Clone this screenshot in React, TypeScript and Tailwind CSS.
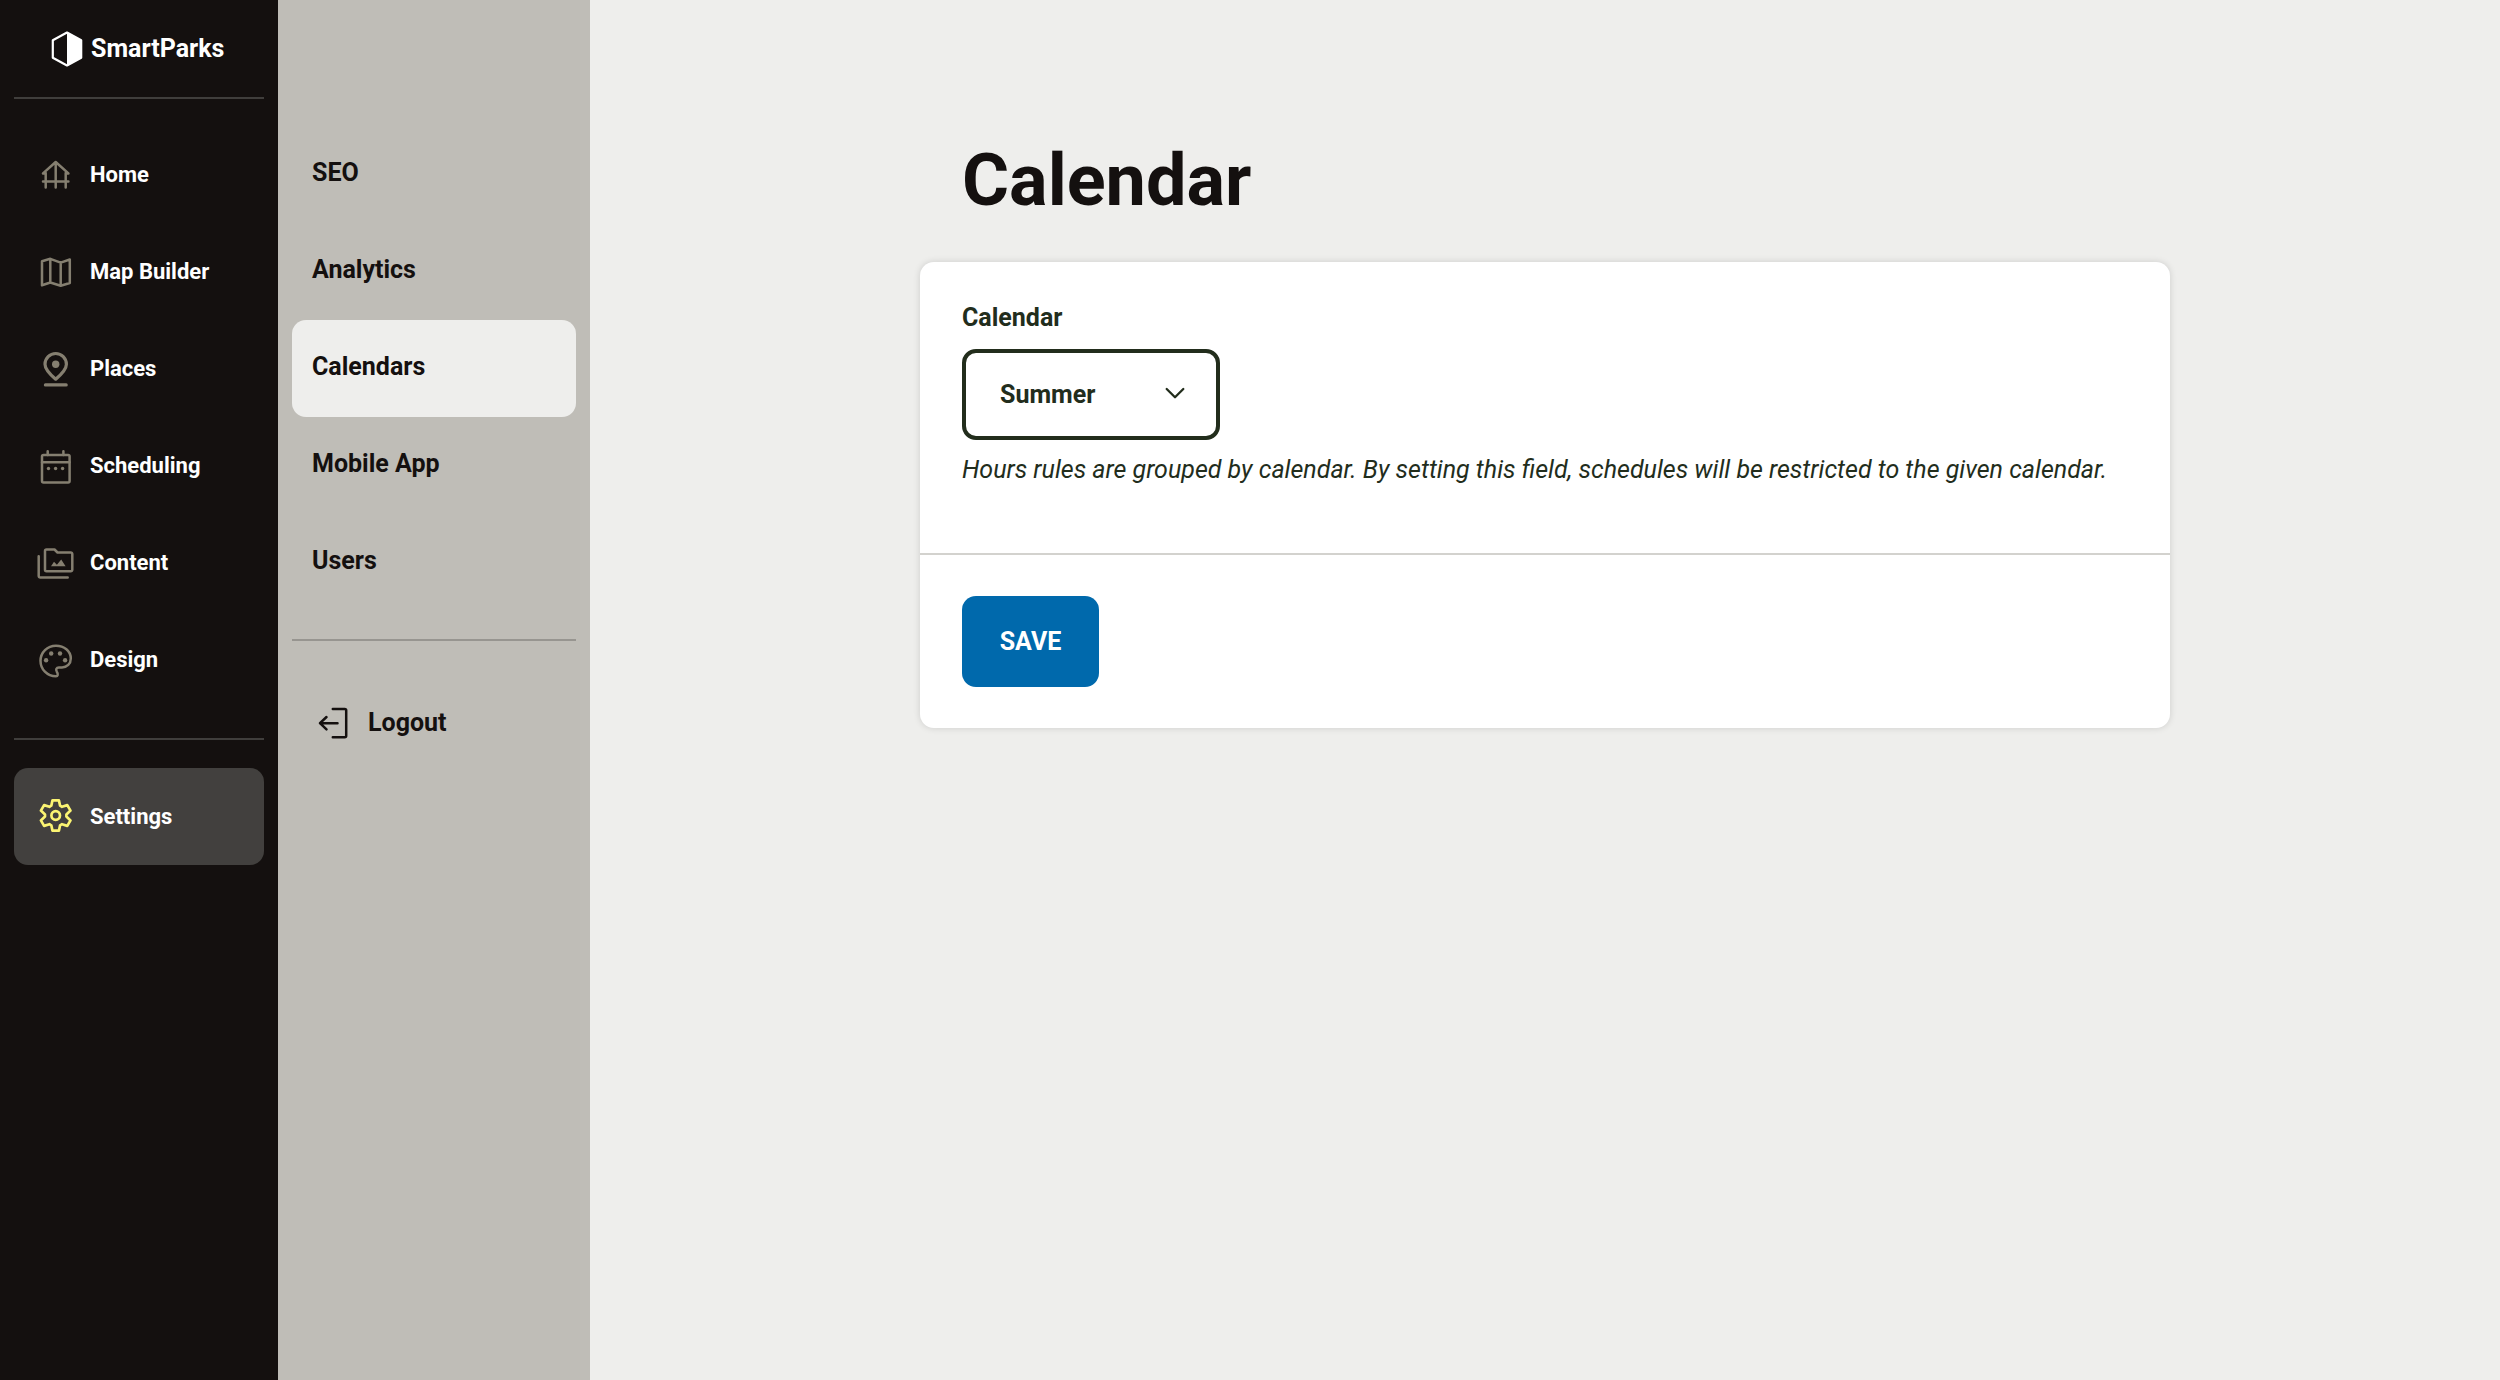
import type { ReactNode } from "react";

function Icon({ children }: { children: ReactNode }) {
  return (
    <svg
      className="size-10 shrink-0"
      viewBox="0 0 40 40"
      fill="none"
      stroke="currentColor"
      strokeWidth="2.5"
      strokeLinecap="round"
      strokeLinejoin="round"
      aria-hidden="true"
    >
      {children}
    </svg>
  );
}

const mainLinks = [
  {
    label: "Home",
    icon: (
      <Icon>
        <path d="M7 18.4 19.7 7 32.4 18.4M7 18.4h2.6M29.8 18.4h2.6M7 26.4h25.4M9.7 18v14.6M19.7 7v25.6M29.7 18v14.6" />
      </Icon>
    ),
  },
  {
    label: "Map Builder",
    icon: (
      <Icon>
        <path d="M6 9.2 14.3 6.8 24.7 10.6 33.8 7.5V31L24.7 33.7 14.3 30.5 6 33.3ZM14.3 6.8v23.7M24.7 10.6v23.1" />
      </Icon>
    ),
  },
  {
    label: "Places",
    icon: (
      <Icon>
        <path
          strokeWidth="3.2"
          d="M19.7 30.2C15 26.2 9 20.8 9 15.2a10.7 10.7 0 0 1 21.4 0c0 5.6-6 11-10.7 15ZM9.4 35.9h20.8"
        />
        <circle cx="19.7" cy="15.2" r="3.7" fill="currentColor" stroke="none" />
      </Icon>
    ),
  },
  {
    label: "Scheduling",
    icon: (
      <Icon>
        <rect x="6" y="9" width="27.6" height="27.5" rx="1.5" />
        <path d="M6 16.2h27.6M11.7 5.2v3.8M27.4 5.2v3.8" />
        <g fill="currentColor" stroke="none">
          <circle cx="12.5" cy="22.5" r="1.7" />
          <circle cx="19.6" cy="22.5" r="1.7" />
          <circle cx="26.6" cy="22.5" r="1.7" />
        </g>
      </Icon>
    ),
  },
  {
    label: "Content",
    icon: (
      <Icon>
        <path d="M2.7 13.2v19.8a1.5 1.5 0 0 0 1.5 1.5h27.5" />
        <path d="M10.5 6.5h8l3 3h13.3a1.5 1.5 0 0 1 1.5 1.5v15.7a1.5 1.5 0 0 1-1.5 1.5H10.5A1.5 1.5 0 0 1 9 26.7V8a1.5 1.5 0 0 1 1.5-1.5Z" />
        <path
          d="M15 23.3 18 18.8 20.9 21.7 25.2 16.4 29.6 23.3Z"
          fill="currentColor"
          stroke="none"
        />
      </Icon>
    ),
  },
  {
    label: "Design",
    icon: (
      <Icon>
        <path d="M20 36.3C11 36.3 4.5 29.3 4.5 20.8S11.3 5.7 20 5.7c8 0 14.8 5.2 14.8 12.8 0 5.3-3.8 9-8.8 9h-3.2c-2.3 0-3.4 2-2 4.2 1.8 2.6.9 4.6-.8 4.6Z" />
        <g fill="currentColor" stroke="none">
          <circle cx="15.2" cy="13.5" r="2.2" />
          <circle cx="24" cy="13.5" r="2.2" />
          <circle cx="10.1" cy="20.3" r="2.2" />
          <circle cx="29.1" cy="20.3" r="2.2" />
        </g>
      </Icon>
    ),
  },
];

const settingsLinks = ["SEO", "Analytics", "Calendars", "Mobile App", "Users"];

function MainNav() {
  return (
    <aside className="w-[278px] shrink-0 bg-[#14100f] px-3.5 text-white">
      <a
        href="#"
        className="flex h-[99px] items-center gap-2 border-b-2 border-[#403e3c] pl-[37px] text-[25px] font-bold"
      >
        <svg className="h-9 w-8" viewBox="0 0 32 36" aria-hidden="true">
          <path
            d="M16 1.5 30.2 9.3V26.7L16 34.5 1.8 26.7V9.3Z"
            fill="none"
            stroke="white"
            strokeWidth="2.2"
            strokeLinejoin="round"
          />
          <path d="M16 1.5 30.2 9.3V26.7L16 34.5Z" fill="white" />
        </svg>
        SmartParks
      </a>
      <nav className="pt-[27px] text-[22px] font-bold">
        <ul className="border-b-2 border-[#403e3c] pb-[30px]">
          {mainLinks.map(({ label, icon }) => (
            <li key={label}>
              <a
                href="#"
                className="flex h-[97px] items-center gap-3.5 rounded-[14px] pl-[22px]"
              >
                <span className="text-[#857f70]">{icon}</span>
                {label}
              </a>
            </li>
          ))}
        </ul>
        <a
          href="#"
          aria-current="page"
          className="mt-7 flex h-[97px] items-center gap-3.5 rounded-[14px] bg-[#42403e] pl-[22px]"
        >
          <span className="text-[#fbf472]">
            <Icon>
              <g transform="translate(19.7 18.5)" strokeWidth="2.7">
                <path d="M-3.2-15.2H3.2L4.4-9.8 6.3-8.7 11.6-10.4 14.8-4.9 10.7-1.1V1.1L14.8 4.9 11.6 10.4 6.3 8.7 4.4 9.8 3.2 15.2H-3.2L-4.4 9.8-6.3 8.7-11.6 10.4-14.8 4.9-10.7 1.1V-1.1L-14.8-4.9-11.6-10.4-6.3-8.7-4.4-9.8Z" />
                <circle r="4.3" />
              </g>
            </Icon>
          </span>
          Settings
        </a>
      </nav>
    </aside>
  );
}

function SettingsNav() {
  return (
    <aside className="w-[312px] shrink-0 bg-[#bfbdb7] px-3.5 pt-[126px] text-[25px] font-bold text-[#14100f]">
      <nav>
        <ul className="border-b-2 border-[#979590] pb-7">
          {settingsLinks.map((label) => (
            <li key={label}>
              <a
                href="#"
                className={
                  label === "Calendars"
                    ? "flex h-[97px] items-center rounded-[14px] bg-[#eeeeec] px-5 pb-1"
                    : "flex h-[97px] items-center rounded-[14px] px-5 pb-1"
                }
              >
                {label}
              </a>
            </li>
          ))}
        </ul>
        <a href="#" className="mt-[33px] flex h-[97px] items-center gap-4 px-5">
          <Icon>
            <path d="M25.5 20.2H8M14.5 14 8 20.2 14.5 26.4M20.8 6H32.7a1.5 1.5 0 0 1 1.5 1.5V32.8a1.5 1.5 0 0 1-1.5 1.5H20.8" />
          </Icon>
          Logout
        </a>
      </nav>
    </aside>
  );
}

export default function App() {
  return (
    <div className="flex min-h-screen bg-[#eeeeec] font-['Roboto',sans-serif]">
      <MainNav />
      <SettingsNav />
      <main className="flex-1 px-10 pt-[139px]">
        <div className="mx-auto max-w-[1250px]">
          <h1 className="px-[42px] text-7xl leading-[84px] font-bold text-[#14100f]">
            Calendar
          </h1>
          <form
            className="mt-[39px] rounded-[14px] bg-white text-[25px] leading-8 text-[#222d1c] shadow-[0_0_7px_rgba(0,0,0,0.14)]"
            onSubmit={(e) => e.preventDefault()}
          >
            <div className="border-b-2 border-[#d3d2ce] px-[42px] pt-10 pb-[67px]">
              <label htmlFor="calendar" className="block font-bold">
                Calendar
              </label>
              <div className="relative mt-[15px] w-[258px]">
                <select
                  id="calendar"
                  className="h-[91px] w-full appearance-none rounded-[14px] border-4 border-[#222d1c] bg-white px-[34px] font-bold"
                >
                  <option>Summer</option>
                </select>
                <svg
                  className="pointer-events-none absolute top-9 right-[33px] h-4 w-6"
                  viewBox="0 0 24 16"
                  fill="none"
                  stroke="currentColor"
                  strokeWidth="2.3"
                  strokeLinecap="round"
                  strokeLinejoin="round"
                  aria-hidden="true"
                >
                  <path d="M3.7 4 12 12.3 20.3 4" />
                </svg>
              </div>
              <p className="mt-3.5 italic">
                Hours rules are grouped by calendar. By setting this field,
                schedules will be restricted to the given calendar.
              </p>
            </div>
            <div className="px-[42px] py-[41px]">
              <button
                type="submit"
                className="h-[91px] w-[137px] rounded-[14px] bg-[#0069ac] font-bold text-white"
              >
                SAVE
              </button>
            </div>
          </form>
        </div>
      </main>
    </div>
  );
}
